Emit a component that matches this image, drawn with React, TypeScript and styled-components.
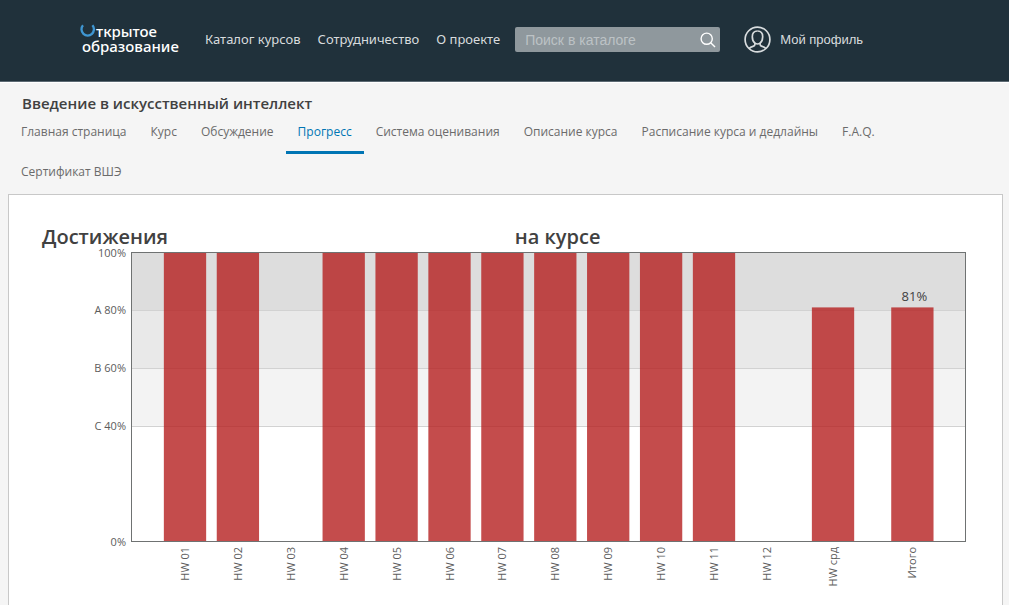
import React from "react";
import styled, { createGlobalStyle } from "styled-components";

const GlobalStyle = createGlobalStyle`
  * { box-sizing: border-box; }
  body {
    margin: 0;
    background: #f5f5f5;
    color: #414141;
    font-family: "Open Sans", "Noto Sans", sans-serif;
  }
`;

const Header = styled.header`
  display: flex;
  align-items: center;
  min-height: 82px;
  padding: 0 80px 2px;
  background: #20313b;
  border-bottom: 1px solid #5c6a73;
`;

const Logo = styled.a`
  display: flex;
  flex-direction: column;
  width: 125px;
  padding-bottom: 2px;
  color: #fff;
  font-family: "Noto Sans", sans-serif;
  font-size: 15px;
  font-weight: 500;
  line-height: 15px;
  text-decoration: none;
`;

const LogoTop = styled.span`
  display: flex;
  gap: 1px;
`;

const LogoBottom = styled.span`
  padding-left: 2px;
`;

const MainNav = styled.nav`
  display: flex;
  gap: 17px;
  padding-bottom: 2px;
`;

const MainLink = styled.a`
  color: #d8dcde;
  font-family: "Noto Sans", sans-serif;
  font-size: 13px;
  line-height: 20px;
  white-space: nowrap;
  text-decoration: none;
`;

const Search = styled.form`
  display: flex;
  align-items: center;
  width: 205px;
  height: 25px;
  margin-left: 15px;
  background: #8f989d;
  border-radius: 2px;
`;

const SearchInput = styled.input`
  flex: 1;
  min-width: 0;
  padding: 0 0 0 10px;
  border: 0;
  outline: 0;
  background: none;
  color: #fff;
  font-family: "Liberation Sans", sans-serif;
  font-size: 14px;

  &::placeholder {
    color: #bcc2c5;
    opacity: 1;
  }
`;

const SearchButton = styled.button`
  display: flex;
  padding: 0 4px;
  border: 0;
  background: none;
`;

const Profile = styled.a`
  display: flex;
  align-items: center;
  gap: 9px;
  margin-left: 24px;
  color: #d8dcde;
  font-family: "Liberation Sans", sans-serif;
  font-size: 13px;
  white-space: nowrap;
  text-decoration: none;
`;

const CourseBar = styled.section`
  padding: 10px 9px 0;
  border-top: 1px solid #fff;
`;

const CourseTitle = styled.h1`
  margin: 0;
  padding: 0 13px;
  font-size: 15px;
  font-weight: 600;
  line-height: 20px;
`;

const Tabs = styled.nav`
  display: flex;
  flex-wrap: wrap;
  padding: 1px 0 0;
`;

const Tab = styled.a<{ $active?: boolean }>`
  height: 40px;
  padding: 8px 12px 0;
  border-bottom: 3px solid ${(p) => (p.$active ? "#0075b4" : "transparent")};
  color: ${(p) => (p.$active ? "#0075b4" : "#6b6b6b")};
  font-size: 12px;
  line-height: 20px;
  white-space: nowrap;
  text-decoration: none;
`;

const Card = styled.main`
  min-height: 411px;
  margin: 0 6px 0 8px;
  padding: 29px 33px 0;
  background: #fff;
  border: 1px solid #c8c8c8;
  border-bottom: 0;
`;

const ChartTitle = styled.h2`
  display: flex;
  margin: 0;
  font-size: 20px;
  font-weight: 600;
  line-height: 26px;
`;

const TitleStart = styled.span`
  flex: 0 0 51%;
`;

const Chart = styled.svg`
  display: block;
  width: 100%;
  height: auto;
  overflow: visible;
  font-family: "Open Sans", sans-serif;
`;

const AxisText = styled.text`
  fill: #5c5c5c;
  font-size: 11px;
  text-anchor: end;
`;

const ValueText = styled.text`
  fill: #414141;
  font-size: 13px;
  text-anchor: middle;
`;

const mainLinks = ["Каталог курсов", "Сотрудничество", "О проекте"];

const tabs = [
  "Главная страница",
  "Курс",
  "Обсуждение",
  "Прогресс",
  "Система оценивания",
  "Описание курса",
  "Расписание курса и дедлайны",
  "F.A.Q.",
  "Сертификат ВШЭ",
];

const bars = [
  ...[100, 100, 0, 100, 100, 100, 100, 100, 100, 100, 100, 0].map((value, i) => ({
    label: `HW ${String(i + 1).padStart(2, "0")}`,
    value,
    slot: i,
    showValue: false,
  })),
  { label: "HW срд", value: 81, slot: 12.25, showValue: false },
  { label: "Итого", value: 81, slot: 13.75, showValue: true },
];

const levels = [
  { label: "100%", value: 100, fill: "#dddddd", to: 80 },
  { label: "A 80%", value: 80, fill: "#e9e9e9", to: 60 },
  { label: "B 60%", value: 60, fill: "#f3f3f3", to: 40 },
  { label: "C 40%", value: 40, fill: "#ffffff", to: 0 },
  { label: "0%", value: 0, fill: "none", to: 0 },
];

const plot = { left: 89.5, top: 2.5, width: 834, height: 289 };
const slotWidth = 52.9;
const barWidth = 42.3;
const yOf = (v: number) => plot.top + plot.height * (1 - v / 100);

function GradeChart() {
  return (
    <Chart viewBox="0 0 927 350" role="img" aria-label="Достижения на курсе">
      {levels.map((l) => (
        <g key={l.label}>
          <rect
            x={plot.left}
            y={yOf(l.value)}
            width={plot.width}
            height={yOf(l.to) - yOf(l.value)}
            fill={l.fill}
          />
          {l.value > 0 && l.value < 100 && (
            <rect x={plot.left} y={Math.round(yOf(l.value))} width={plot.width} height={1} fill="#d2d2d2" />
          )}
          <AxisText x={84} y={Math.round(yOf(l.value)) + 4}>
            {l.label}
          </AxisText>
        </g>
      ))}
      {bars.map((b) => {
        const center = 143 + b.slot * slotWidth;
        return (
          <g key={b.label}>
            <rect
              x={center - barWidth / 2}
              y={yOf(b.value)}
              width={barWidth}
              height={yOf(0) - yOf(b.value)}
              fill="#b51f1f"
              fillOpacity={0.8}
            />
            <AxisText transform={`translate(${center + 4} 297) rotate(-90)`}>{b.label}</AxisText>
            {b.showValue && (
              <ValueText x={center + 2} y={yOf(b.value) - 6}>
                {b.value}%
              </ValueText>
            )}
          </g>
        );
      })}
      <rect
        x={plot.left}
        y={plot.top}
        width={plot.width}
        height={plot.height}
        fill="none"
        stroke="#6f7272"
      />
    </Chart>
  );
}

export default function App() {
  return (
    <>
      <GlobalStyle />
      <Header>
        <Logo href="#">
          <LogoTop>
            <svg width="15" height="15" viewBox="0 0 15 15" fill="none" aria-hidden="true">
              <path d="M3 1.3A6.2 6.2 0 1 0 12.4 1.3" stroke="#3f97d3" strokeWidth="2.3" />
            </svg>
            ткрытое
          </LogoTop>
          <LogoBottom>образование</LogoBottom>
        </Logo>
        <MainNav>
          {mainLinks.map((l) => (
            <MainLink key={l} href="#">
              {l}
            </MainLink>
          ))}
        </MainNav>
        <Search>
          <SearchInput type="search" placeholder="Поиск в каталоге" aria-label="Поиск в каталоге" />
          <SearchButton type="button" aria-label="Найти">
            <svg width="16" height="16" viewBox="0 0 16 16" fill="none" stroke="#fff" strokeWidth="1.4">
              <circle cx="6.7" cy="6.7" r="5.6" />
              <path d="M10.7 10.7 15 15" />
            </svg>
          </SearchButton>
        </Search>
        <Profile href="#">
          <svg width="27" height="27" viewBox="0 0 27 27" fill="none" stroke="#d8dcde" strokeWidth="1.7" aria-hidden="true">
            <circle cx="13.5" cy="13.5" r="12.4" />
            <path d="M13.5 5C10 5 8.3 7.5 8.3 10.8C8.3 13.6 9.3 15.9 10.9 17.1V18.6C10.9 19.6 10.2 20.1 9 20.4C7.3 20.8 6 21.5 5 22.6" />
            <path d="M13.5 5C17 5 18.7 7.5 18.7 10.8C18.7 13.6 17.7 15.9 16.1 17.1V18.6C16.1 19.6 16.8 20.1 18 20.4C19.7 20.8 21 21.5 22 22.6" />
            <path d="M10.9 17.1C12.5 18.2 14.5 18.2 16.1 17.1" />
          </svg>
          Мой профиль
        </Profile>
      </Header>
      <CourseBar>
        <CourseTitle>Введение в искусственный интеллект</CourseTitle>
        <Tabs>
          {tabs.map((t) => (
            <Tab key={t} href="#" $active={t === "Прогресс"}>
              {t}
            </Tab>
          ))}
        </Tabs>
      </CourseBar>
      <Card>
        <ChartTitle>
          <TitleStart>Достижения</TitleStart>
          <span>на курсе</span>
        </ChartTitle>
        <GradeChart />
      </Card>
    </>
  );
}
